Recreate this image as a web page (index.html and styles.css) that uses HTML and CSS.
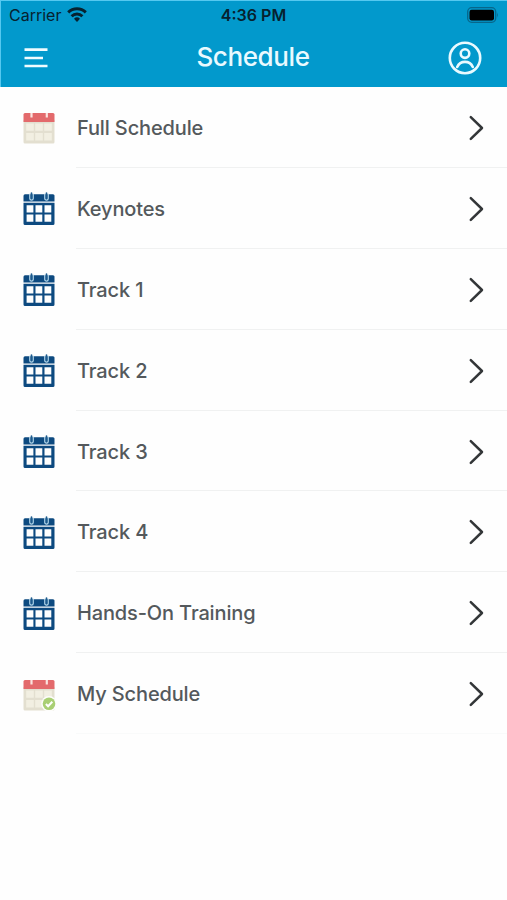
FILE: index.html
```html
<!doctype html>
<html lang="en">
  <head>
    <meta charset="UTF-8" />
    <meta name="viewport" content="width=device-width, initial-scale=1.0" />
    <title>Schedule</title>
    <link rel="stylesheet" href="styles.css">
  </head>
  <body>
    <!-- shared icons -->
    <svg class="sprite">
      <symbol id="chevron" viewBox="0 0 16 26">
        <path d="M1.800 2.200 L13 13 L1.800 23.800" fill="none" stroke="#333638" stroke-width="2.500" stroke-linecap="round" stroke-linejoin="round" />
      </symbol>
      <symbol id="cal-blue" viewBox="0 0 34 34">
        <path d="M3 3.200h28q1.500 0 1.500 1.500V10.500h-31V4.700Q1.500 3.200 3 3.200z" fill="#0d4a80" />
        <path fill-rule="evenodd" d="M1.500 11.700h31V32.500q0 1.500-1.500 1.500H3q-1.500 0-1.500-1.500z
          M4.600 14.300v7.200h6.800v-7.200z M13.500 14.300v7.200h6.800v-7.200z M22.500 14.300v7.200h6.800v-7.200z
          M4.600 23.600v7.200h6.800v-7.200z M13.500 23.600v7.200h6.800v-7.200z M22.500 23.600v7.200h6.800v-7.200z" fill="#0d4a80" />
        <path d="M7.800 2.800v4.600a1.700 1.700 0 0 0 3.400 0V2.800 M22.800 2.800v4.600a1.700 1.700 0 0 0 3.400 0V2.800" fill="none" stroke="#b3d8ec" stroke-width="1.300" />
        <path d="M9.500 2v5 M24.500 2v5" stroke="#1d5b8e" stroke-width="1.700" stroke-linecap="round" />
      </symbol>
      <symbol id="cal-red" viewBox="0 0 34 34">
        <path d="M1.500 10h31v22q0 1.500-1.500 1.500H3q-1.500 0-1.500-1.500z" fill="#e3dfd0" />
        <path d="M4.200 13.500h7.600v7.200h-7.600z M13.200 13.500h7.600v7.200h-7.600z M22.200 13.500h7.600v7.200h-7.600z M4.200 23h7.600v7.500h-7.600z M13.200 23h7.600v7.500h-7.600z M22.200 23h7.600v7.500h-7.600z" fill="#f2efe2" />
        <path d="M3 3h28q1.500 0 1.500 1.500V12h-31V4.500Q1.500 3 3 3z" fill="#e36a6c" />
        <path d="M9.500 3v4.500 M24.800 3v4.500" stroke="#fbe4df" stroke-width="2.200" />
      </symbol>
    </svg>

    <header class="header">
      <div class="status-bar">
        <div class="carrier">
          <span>Carrier</span>
          <svg class="wifi" viewBox="0 0 20 15" fill="none" stroke="#07222f" stroke-width="2.900">
            <path d="M1.200 5.400a12.600 12.600 0 0 1 17.600 0" />
            <path d="M4.600 9.200a7.700 7.700 0 0 1 10.800 0" />
            <path d="M10 15l-3-3.200a4.300 4.300 0 0 1 6 0z" fill="#07222f" stroke="none" />
          </svg>
        </div>
        <span class="time">4:36 PM</span>
        <svg class="battery" viewBox="0 0 32 16">
          <rect x="0.700" y="0.700" width="28" height="14.600" rx="4" fill="none" stroke="#08668a" stroke-width="1.300" />
          <rect x="2.500" y="2.800" width="24.500" height="10.600" rx="2.200" fill="#000" />
          <path d="M30 5.500q1.800 2.500 0 5z" fill="#08668a" />
        </svg>
      </div>
      <nav class="nav-bar">
        <svg class="menu" viewBox="0 0 24 22" stroke="#f0fcff" stroke-width="2.700">
          <path d="M0.500 2.700h23 M0.500 11h18.500 M0.500 19h23" />
        </svg>
        <h1 class="title">Schedule</h1>
        <svg class="profile" viewBox="0 0 34 34" fill="none" stroke="#e9faff" stroke-width="2.600">
          <circle cx="17" cy="17" r="15.200" />
          <circle cx="17" cy="12.600" r="4.300" />
          <path d="M9.200 26a8.500 8.500 0 0 1 15.600 0" stroke-linecap="round" />
        </svg>
      </nav>
    </header>

    <main class="list">
      <a class="row">
        <svg class="icon"><use href="#cal-red" /></svg>
        <div class="row-body"><span>Full Schedule</span><svg class="chevron"><use href="#chevron" /></svg></div>
      </a>
      <a class="row">
        <svg class="icon"><use href="#cal-blue" /></svg>
        <div class="row-body"><span>Keynotes</span><svg class="chevron"><use href="#chevron" /></svg></div>
      </a>
      <a class="row">
        <svg class="icon"><use href="#cal-blue" /></svg>
        <div class="row-body"><span>Track 1</span><svg class="chevron"><use href="#chevron" /></svg></div>
      </a>
      <a class="row">
        <svg class="icon"><use href="#cal-blue" /></svg>
        <div class="row-body"><span>Track 2</span><svg class="chevron"><use href="#chevron" /></svg></div>
      </a>
      <a class="row">
        <svg class="icon"><use href="#cal-blue" /></svg>
        <div class="row-body"><span>Track 3</span><svg class="chevron"><use href="#chevron" /></svg></div>
      </a>
      <a class="row">
        <svg class="icon"><use href="#cal-blue" /></svg>
        <div class="row-body"><span>Track 4</span><svg class="chevron"><use href="#chevron" /></svg></div>
      </a>
      <a class="row">
        <svg class="icon"><use href="#cal-blue" /></svg>
        <div class="row-body"><span>Hands-On Training</span><svg class="chevron"><use href="#chevron" /></svg></div>
      </a>
      <a class="row">
        <svg class="icon" viewBox="0 0 34 34">
          <use href="#cal-red" width="34" height="34" />
          <circle cx="27" cy="26.800" r="7.800" fill="#fdfdfb" />
          <circle cx="27" cy="26.800" r="6.300" fill="#a9cf74" />
          <path d="M23.900 27l2.200 2.200 4.200-4.400" fill="none" stroke="#fff" stroke-width="2" />
        </svg>
        <div class="row-body"><span>My Schedule</span><svg class="chevron"><use href="#chevron" /></svg></div>
      </a>
    </main>
  </body>
</html>
```

FILE: styles.css
```css
:root {
  --blue: #0299cc;
  --edge: #55c8f0;
  --label: #54595c;
  --line: #f0f1f1;
}
* {
  box-sizing: border-box;
}
body {
  margin: 0;
  min-height: 100vh;
  background-color: #fefefe;
  font-family: Inter, "Liberation Sans", sans-serif;
  color: var(--label);
}
svg {
  display: block;
  flex: none;
}
.sprite {
  display: none;
}

.header {
  height: 87px;
  background-color: var(--blue);
  border-top: 1px solid var(--edge);
  border-left: 1px solid var(--edge);
}
.status-bar {
  display: grid;
  grid-template-columns: 1fr auto 1fr;
  align-items: center;
  height: 27px;
  padding: 0 8px 0 8px;
  font-size: 16px;
  color: #07222f;
}
.carrier {
  display: flex;
  align-items: center;
  gap: 6px;
}
.wifi {
  width: 20px;
  height: 15px;
}
.time {
  margin-right: 1px;
  font-weight: 600;
}
.battery {
  width: 32px;
  height: 16px;
  justify-self: end;
}
.nav-bar {
  display: grid;
  grid-template-columns: 1fr auto 1fr;
  align-items: center;
  height: 59px;
  padding: 0 25px 0 23px;
}
.menu {
  width: 24px;
  height: 22px;
}
.title {
  margin: 0 0 3px;
  font-size: 26px;
  font-weight: 500;
  letter-spacing: -0.4px;
  color: #e9faff;
}
.profile {
  width: 34px;
  height: 34px;
  justify-self: end;
}

.row {
  display: flex;
  height: 80.9px;
  padding-left: 22px;
  align-items: center;
}
.icon {
  width: 34px;
  height: 34px;
  margin-right: 20px;
}
.row-body {
  flex: 1;
  display: flex;
  align-items: center;
  justify-content: space-between;
  height: 100%;
  padding: 2px 22px 0 1px;
  border-bottom: 1px solid var(--line);
  font-size: 20px;
  font-weight: 500;
  letter-spacing: -0.14px;
}
.row:last-child .row-body {
  border-color: #f9fafa;
}
.chevron {
  width: 16px;
  height: 26px;
}
```
